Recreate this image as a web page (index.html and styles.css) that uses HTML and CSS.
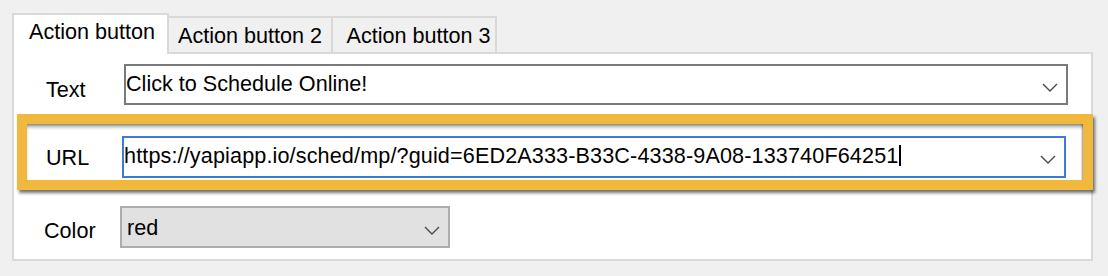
FILE: index.html
```html
<!DOCTYPE html>
<html>
<head>
<meta charset="utf-8">
<link rel="stylesheet" href="styles.css">
</head>
<body>
<div class="tabs">
  <div class="tab tab-active">Action button</div>
  <div class="tab tab-2">Action button 2</div>
  <div class="tab tab-3">Action button 3</div>
</div>
<div class="panel">
  <div class="row row-text">
    <span class="label label-text">Text</span>
    <div class="combo combo-text">
      <span class="value">Click to Schedule Online!</span>
      <svg class="chev" width="16" height="9" viewBox="0 0 16 9"><polyline points="1,1 8,8 15,1" fill="none" stroke="#4a4a4a" stroke-width="1.4"/></svg>
    </div>
  </div>
  <div class="highlight">
    <span class="label label-url">URL</span>
    <div class="combo combo-url">
      <span class="value value-url">https://yapiapp.io/sched/mp/?guid=6ED2A333-B33C-4338-9A08-133740F64251<span class="caret"></span></span>
      <svg class="chev" width="16" height="9" viewBox="0 0 16 9"><polyline points="1,1 8,8 15,1" fill="none" stroke="#4a4a4a" stroke-width="1.4"/></svg>
    </div>
  </div>
  <div class="row row-color">
    <span class="label label-color">Color</span>
    <div class="combo combo-color">
      <span class="value">red</span>
      <svg class="chev" width="16" height="9" viewBox="0 0 16 9"><polyline points="1,1 8,8 15,1" fill="none" stroke="#4a4a4a" stroke-width="1.4"/></svg>
    </div>
  </div>
</div>
</body>
</html>
```

FILE: styles.css
```css
* { box-sizing: border-box; }

html, body {
  margin: 0;
  background: #f0f0f0;
}

body {
  padding: 13px 0 0 12px;
  font-family: "Liberation Sans", Arial, sans-serif;
  font-size: 21.6px;
  line-height: 24px;
  color: #000;
}

.tabs {
  display: flex;
  align-items: flex-end;
}

.tab {
  background: #f0f0f0;
  border-top: 2px solid #d9d9d9;
  border-right: 2px solid #d9d9d9;
  white-space: nowrap;
}

.tab-active {
  position: relative;
  z-index: 1;
  width: 157px;
  height: 41px;
  margin-bottom: -2px;
  padding: 5px 0 0 15px;
  background: #fff;
  border-left: 2px solid #d9d9d9;
}

.tab-2 {
  width: 164px;
  height: 36px;
  padding: 5.8px 0 0 9px;
}

.tab-3 {
  width: 164px;
  height: 36px;
  padding: 5.8px 0 0 13.5px;
}

.panel {
  width: 1081px;
  height: 209px;
  background: #fff;
  border: 2px solid #d9d9d9;
  display: flex;
  flex-direction: column;
}

.row {
  display: flex;
  align-items: flex-start;
}

.label {
  white-space: nowrap;
}

.row-text {
  margin-top: 10px;
  padding-left: 32px;
}

.label-text {
  width: 78px;
  padding-top: 13.8px;
}

.combo {
  display: flex;
  align-items: flex-start;
  white-space: nowrap;
}

.combo .chev {
  margin-left: auto;
  margin-right: 8px;
  align-self: center;
  flex: none;
}

.combo-text {
  width: 944px;
  height: 41px;
  border: 2px solid #7a7a7a;
  padding: 5.5px 0 0 0;
}

.highlight {
  display: flex;
  align-items: flex-start;
  margin: 9px -2px 0 3px;
  border: 10px solid #f0b83d;
  padding: 12px 0 2px 19px;
  box-shadow: 2px 3px 3px rgba(0, 0, 0, 0.55),
              inset 0 4px 4px -2px rgba(0, 0, 0, 0.55),
              inset -2px 0 2px -1px rgba(0, 0, 0, 0.35);
}

.label-url {
  width: 76px;
  padding-top: 10px;
}

.combo-url {
  width: 944px;
  height: 42px;
  border: 2px solid #3a7bd3;
  padding: 5.8px 0 0 0;
}

.value-url {
  letter-spacing: 0.13px;
}

.caret {
  display: inline-block;
  width: 2px;
  height: 21px;
  margin-left: 1px;
  background: #000;
  vertical-align: -3px;
}

.row-color {
  margin-top: 16px;
  padding-left: 30px;
}

.label-color {
  width: 76px;
  padding-top: 12.5px;
}

.combo-color {
  width: 330px;
  height: 42px;
  background: #e1e1e1;
  border: 2px solid #adadad;
  padding: 7.5px 0 0 5px;
}
```
